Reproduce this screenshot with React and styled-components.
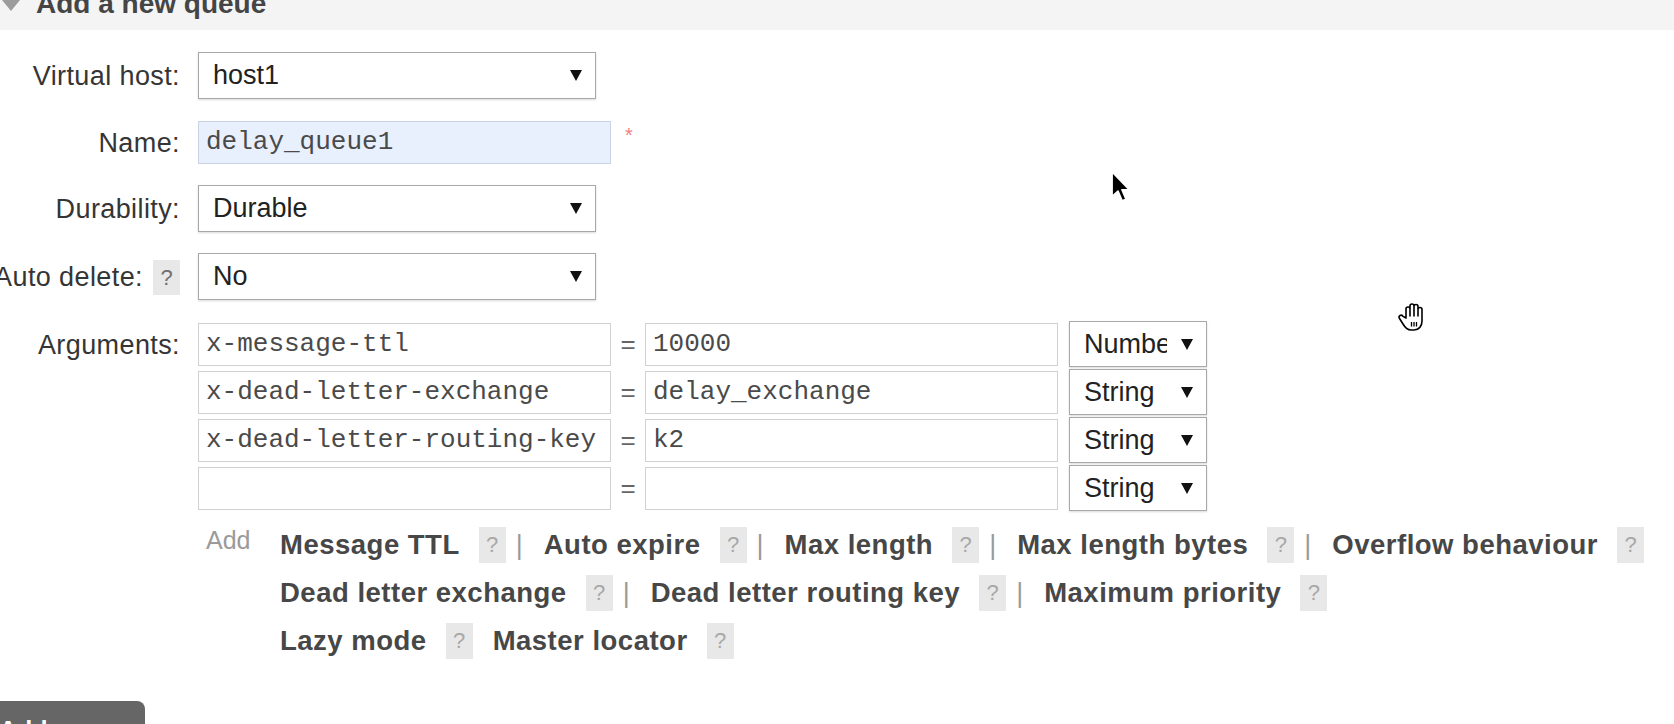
import React from 'react';
import styled, { createGlobalStyle } from 'styled-components';

const GlobalStyle = createGlobalStyle`
  html, body {
    margin: 0;
    padding: 0;
    background: #fff;
    overflow: hidden;
  }
  body {
    font-family: "Liberation Sans", Arial, sans-serif;
    color: #333;
  }
`;

const shortcutLines = [
    [
        { name: 'Message TTL', sep: true },
        { name: 'Auto expire', sep: true },
        { name: 'Max length', sep: true },
        { name: 'Max length bytes', sep: true },
        { name: 'Overflow behaviour' },
    ],
    [
        { name: 'Dead letter exchange', sep: true },
        { name: 'Dead letter routing key', sep: true },
        { name: 'Maximum priority' },
    ],
    [
        { name: 'Lazy mode' },
        { name: 'Master locator' },
    ],
];

const argumentRows = [
    { key: 'x-message-ttl', value: '10000', type: 'Number' },
    { key: 'x-dead-letter-exchange', value: 'delay_exchange', type: 'String' },
    { key: 'x-dead-letter-routing-key', value: 'k2', type: 'String' },
    { key: '', value: '', type: 'String' },
];

const Dropdown = ({ value, width, height }) => (
    <Select $width={width} $height={height}>
        <SelectValue>{value}</SelectValue>
        <Caret />
    </Select>
);

const ArrowCursor = () => (
    <PointerCursor width="19" height="31" viewBox="0 0 12 20">
        <path
            d="M0.6 0.6 L0.6 16.4 L4.4 12.9 L7.1 19.2 L9.5 18.2 L6.9 12.1 L11.6 12.1 Z"
            fill="#000"
            stroke="#fff"
            strokeWidth="1"
            strokeLinejoin="round"
        />
    </PointerCursor>
);

const GrabCursor = () => (
    <HandCursor width="32" height="32" viewBox="0 0 32 32">
        <path
            d="M9 17 V8 a2 2 0 0 1 4 0 V15 V5 a2 2 0 0 1 4 0 V15 V5.5 a2 2 0 0 1 4 0 V15 V8.5 a2 2 0 0 1 4 0 V20 c0 5 -3 9 -8 9 h-3 c-4 0 -6 -2.5 -8 -6 l-3.5 -5.5 a2 2 0 0 1 3.2 -2.4 Z"
            fill="#fff"
            stroke="#000"
            strokeWidth="1.6"
            strokeLinejoin="round"
        />
        <path d="M14.5 21 v4.5 M17 21 v4.5 M19.5 21 v4.5" stroke="#000" strokeWidth="1.3" />
    </HandCursor>
);

const AddQueueForm = () => {
    return (
        <Page>
            <GlobalStyle />
            <SectionHeader>
                <Toggle />
                <HeaderTitle>Add a new queue</HeaderTitle>
            </SectionHeader>

            <Form>
                <Row>
                    <Label>Virtual host:</Label>
                    <Dropdown value="host1" width={398} />
                </Row>

                <Row>
                    <Label>Name:</Label>
                    <Field>
                        <TextInput $active defaultValue="delay_queue1" />
                        <Required>*</Required>
                    </Field>
                </Row>

                <Row>
                    <Label>Durability:</Label>
                    <Dropdown value="Durable" width={398} />
                </Row>

                <Row $spaced>
                    <Label>
                        Auto delete:
                        <Help $inline>?</Help>
                    </Label>
                    <Dropdown value="No" width={398} />
                </Row>

                <Row $top $spaced>
                    <Label>Arguments:</Label>
                    <div>
                        <ArgList>
                            {argumentRows.map((arg, i) => (
                                <ArgRow key={i}>
                                    <TextInput defaultValue={arg.key} />
                                    <Equals>=</Equals>
                                    <TextInput defaultValue={arg.value} />
                                    <Dropdown value={arg.type} width={138} height={46} />
                                </ArgRow>
                            ))}
                        </ArgList>

                        <Shortcuts>
                            <AddHint>Add</AddHint>
                            <ShortcutLines>
                                {shortcutLines.map((line, i) => (
                                    <ShortcutLine key={i}>
                                        {line.map((item) => (
                                            <React.Fragment key={item.name}>
                                                <ShortcutLink>{item.name}</ShortcutLink>
                                                <Help>?</Help>
                                                {item.sep && <Separator>|</Separator>}
                                            </React.Fragment>
                                        ))}
                                    </ShortcutLine>
                                ))}
                            </ShortcutLines>
                        </Shortcuts>
                    </div>
                </Row>
            </Form>

            <SubmitButton>Add queue</SubmitButton>

            <ArrowCursor />
            <GrabCursor />
        </Page>
    );
};

// Styled components
const Page = styled.div`
  position: relative;
  width: 1674px;
  height: 724px;
  overflow: hidden;
`;

const SectionHeader = styled.div`
  display: flex;
  align-items: flex-start;
  height: 30px;
  background: #f4f4f4;
  overflow: hidden;
`;

const Toggle = styled.span`
  width: 0;
  height: 0;
  margin: 0 16px 0 2px;
  border-left: 9px solid transparent;
  border-right: 9px solid transparent;
  border-top: 11px solid #9c9c9c;
`;

const HeaderTitle = styled.h2`
  margin: -10px 0 0;
  font-size: 28px;
  line-height: 28px;
  font-weight: bold;
  color: #454545;
`;

const Form = styled.div`
  display: flex;
  flex-direction: column;
  gap: 20px;
  padding-top: 22px;
`;

const Row = styled.div`
  display: grid;
  grid-template-columns: 180px auto;
  column-gap: 18px;
  margin-top: ${(p) => (p.$spaced ? 1 : 0)}px;
  align-items: ${(p) => (p.$top ? 'start' : 'center')};
`;

const Label = styled.div`
  display: flex;
  align-items: center;
  justify-content: flex-end;
  gap: 10px;
  height: 46px;
  padding-top: 2px;
  box-sizing: border-box;
  white-space: nowrap;
  font-size: 27px;
  letter-spacing: 0.4px;
  color: #353535;
`;

const Field = styled.div`
  display: flex;
  align-items: flex-start;
`;

const Select = styled.div`
  box-sizing: border-box;
  display: flex;
  align-items: center;
  width: ${(p) => p.$width}px;
  height: ${(p) => p.$height || 47}px;
  padding-left: 14px;
  border: 1px solid #a8a8a8;
  background: #fff;
  box-shadow: 0 1px 2px rgba(0, 0, 0, 0.15);
  font-size: 27px;
  color: #222;
`;

const SelectValue = styled.span`
  flex: 1;
  overflow: hidden;
  white-space: nowrap;
`;

const Caret = styled.span`
  flex: none;
  width: 0;
  height: 0;
  margin: 0 13px 0 14px;
  border-left: 6px solid transparent;
  border-right: 6px solid transparent;
  border-top: 11px solid #111;
`;

const TextInput = styled.input`
  box-sizing: border-box;
  width: 413px;
  height: 43px;
  margin: 0;
  padding: 0 7px;
  border: 1px solid ${(p) => (p.$active ? '#c9d3e2' : '#d0d0d0')};
  background: ${(p) => (p.$active ? '#e8f0fe' : '#fff')};
  font-family: "Liberation Mono", "Courier New", monospace;
  font-size: 26px;
  color: #4a4a4a;
  outline: none;
`;

const Required = styled.span`
  margin: 4px 0 0 14px;
  font-size: 20px;
  line-height: 20px;
  color: #f08080;
`;

const ArgList = styled.div`
  display: flex;
  flex-direction: column;
  gap: 2px;
`;

const ArgRow = styled.div`
  display: flex;
  align-items: center;
  height: 46px;

  & > div {
    margin-left: 11px;
  }
`;

const Equals = styled.span`
  width: 34px;
  text-align: center;
  font-size: 26px;
  color: #666;
`;

const Shortcuts = styled.div`
  display: flex;
  align-items: flex-start;
  margin-top: 10px;
`;

const AddHint = styled.span`
  box-sizing: border-box;
  width: 82px;
  padding-left: 8px;
  font-size: 25px;
  line-height: 38px;
  color: #9a9a9a;
`;

const ShortcutLines = styled.div`
  display: flex;
  flex-direction: column;
`;

const ShortcutLine = styled.div`
  display: flex;
  align-items: center;
  height: 48px;
  white-space: nowrap;

  & > span + b {
    margin-left: 20px;
  }
`;

const ShortcutLink = styled.b`
  font-size: 27.5px;
  font-weight: bold;
  letter-spacing: 0.5px;
  color: #474747;
`;

const Help = styled.span`
  flex: none;
  display: inline-flex;
  align-items: center;
  justify-content: center;
  width: 27px;
  height: ${(p) => (p.$inline ? 35 : 36)}px;
  margin-left: ${(p) => (p.$inline ? 0 : 19)}px;
  background: #e8e8e8;
  font-size: 22px;
  font-weight: normal;
  letter-spacing: 0;
  color: ${(p) => (p.$inline ? '#707070' : '#a8a8a8')};
`;

const Separator = styled.span`
  margin: 0 1px 0 10px;
  font-size: 27px;
  color: #9a9a9a;
`;

const SubmitButton = styled.button`
  display: block;
  margin: 36px 0 0 -16px;
  padding: 17px 17px 12px 15px;
  border: none;
  border-radius: 8px;
  background: #666;
  font-family: "Liberation Sans", Arial, sans-serif;
  font-size: 25px;
  line-height: 25px;
  font-weight: bold;
  color: #fff;
`;

const PointerCursor = styled.svg`
  position: absolute;
  left: 1111px;
  top: 171px;
`;

const HandCursor = styled.svg`
  position: absolute;
  left: 1397px;
  top: 301px;
`;

export default AddQueueForm;
